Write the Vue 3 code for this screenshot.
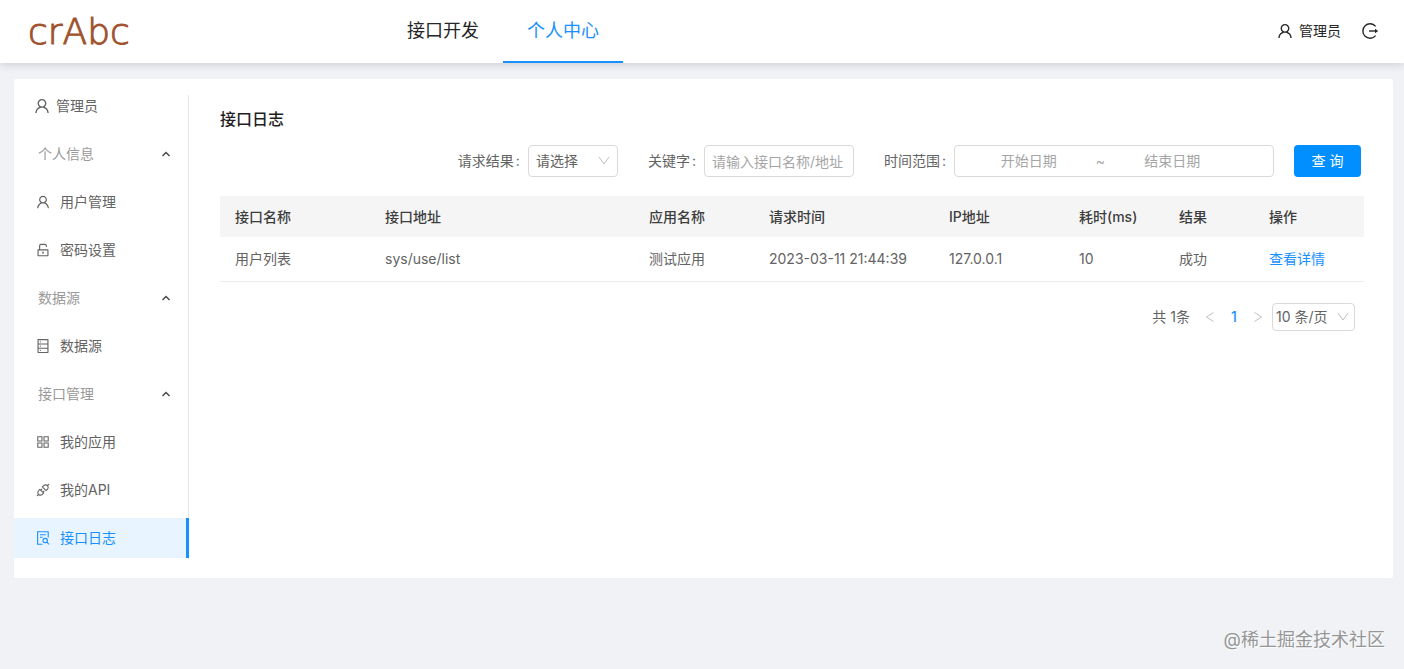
<script setup>
import { ref } from 'vue'

const userPath = 'M858.5 763.6a374 374 0 00-80.6-119.5 375.63 375.63 0 00-119.5-80.6c-.4-.2-.8-.3-1.2-.5C719.5 518 760 444.7 760 362c0-137-111-248-248-248S264 225 264 362c0 82.7 40.5 156 102.8 201.1-.4.2-.8.3-1.2.5-44.8 18.9-85 46-119.5 80.6a375.63 375.63 0 00-80.6 119.5A371.7 371.7 0 00136 901.8a8 8 0 008 8.2h60c4.4 0 7.9-3.5 8-7.8 2-77.2 33-149.5 87.8-204.3 56.7-56.7 132-87.9 212.2-87.9s155.5 31.2 212.2 87.9C779 752.7 810 825 812 902.2c.1 4.4 3.6 7.8 8 7.8h60a8 8 0 008-8.2c-1-47.8-10.9-94.3-29.5-138.2zM512 534c-45.9 0-89.1-17.9-121.6-50.4S340 407.9 340 362c0-45.9 17.9-89.1 50.4-121.6S466.1 190 512 190s89.1 17.9 121.6 50.4S684 316.1 684 362c0 45.9-17.9 89.1-50.4 121.6S557.9 534 512 534z'

const icons = {
  user: userPath,
  unlock: 'M832 464H332V240c0-30.9 25.1-56 56-56h248c30.9 0 56 25.1 56 56v68c0 4.4 3.6 8 8 8h56c4.4 0 8-3.6 8-8v-68c0-70.7-57.3-128-128-128H388c-70.7 0-128 57.3-128 128v224h-68c-17.7 0-32 14.3-32 32v384c0 17.7 14.3 32 32 32h640c17.7 0 32-14.3 32-32V496c0-17.7-14.3-32-32-32zm-40 376H232V536h560v304zM484 701v53c0 4.4 3.6 8 8 8h40c4.4 0 8-3.6 8-8v-53a48.01 48.01 0 10-56 0z',
  database: 'M832 64H192c-17.7 0-32 14.3-32 32v832c0 17.7 14.3 32 32 32h640c17.7 0 32-14.3 32-32V96c0-17.7-14.3-32-32-32zm-600 72h560v208H232V136zm560 480H232V408h560v208zm0 272H232V680h560v208zM304 240a40 40 0 1080 0 40 40 0 10-80 0zm0 272a40 40 0 1080 0 40 40 0 10-80 0zm0 272a40 40 0 1080 0 40 40 0 10-80 0z',
  apps: 'M464 144H160c-8.8 0-16 7.2-16 16v304c0 8.8 7.2 16 16 16h304c8.8 0 16-7.2 16-16V160c0-8.8-7.2-16-16-16zm-52 268H212V212h200v200zm452-268H560c-8.8 0-16 7.2-16 16v304c0 8.8 7.2 16 16 16h304c8.8 0 16-7.2 16-16V160c0-8.8-7.2-16-16-16zm-52 268H612V212h200v200zM464 544H160c-8.8 0-16 7.2-16 16v304c0 8.8 7.2 16 16 16h304c8.8 0 16-7.2 16-16V560c0-8.8-7.2-16-16-16zm-52 268H212V612h200v200zm452-268H560c-8.8 0-16 7.2-16 16v304c0 8.8 7.2 16 16 16h304c8.8 0 16-7.2 16-16V560c0-8.8-7.2-16-16-16zm-52 268H612V612h200v200z',
  api: 'M917.7 148.8l-42.4-42.4c-1.6-1.6-3.6-2.3-5.7-2.3s-4.1.8-5.7 2.3l-76.1 76.1a199.27 199.27 0 00-112.1-34.3c-51.2 0-102.4 19.5-141.5 58.6L432.3 308.7a8.03 8.03 0 000 11.3L704 591.7c1.6 1.6 3.6 2.3 5.7 2.3 2 0 4.1-.8 5.7-2.3l101.9-101.9c68.9-69 77-175.7 24.3-253.5l76.1-76.1c3.1-3.2 3.1-8.3 0-11.4zM769.1 441.7l-59.4 59.4-186.8-186.8 59.4-59.4c24.9-24.9 58.1-38.7 93.4-38.7 35.3 0 68.4 13.7 93.4 38.7 24.9 24.9 38.7 58.1 38.7 93.4 0 35.3-13.8 68.4-38.7 93.4zm-190.2 105a8.03 8.03 0 00-11.3 0L501 613.3 410.7 523l66.7-66.7c3.1-3.1 3.1-8.2 0-11.3L441 408.6a8.03 8.03 0 00-11.3 0L363 475.3l-43-43a7.85 7.85 0 00-5.7-2.3c-2 0-4.1.8-5.7 2.3L206.8 534.2c-68.9 69-77 175.7-24.3 253.5l-76.1 76.1a8.03 8.03 0 000 11.3l42.4 42.4c1.6 1.6 3.6 2.3 5.7 2.3s4.1-.8 5.7-2.3l76.1-76.1c33.7 22.9 72.9 34.3 112.1 34.3 51.2 0 102.4-19.5 141.5-58.6l101.9-101.9c3.1-3.1 3.1-8.2 0-11.3l-43-43 66.7-66.7c3.1-3.1 3.1-8.2 0-11.3l-36.6-36.2zM441.7 769.1a131.32 131.32 0 01-93.4 38.7c-35.3 0-68.4-13.7-93.4-38.7a131.32 131.32 0 01-38.7-93.4c0-35.3 13.7-68.4 38.7-93.4l59.4-59.4 186.8 186.8-59.4 59.4z',
}

const tabs = ['接口开发', '个人中心']
const activeTab = ref('个人中心')

const groups = ref([
  {
    title: '个人信息',
    open: true,
    items: [
      { name: '用户管理', icon: 'user' },
      { name: '密码设置', icon: 'unlock' },
    ],
  },
  {
    title: '数据源',
    open: true,
    items: [{ name: '数据源', icon: 'database' }],
  },
  {
    title: '接口管理',
    open: true,
    items: [
      { name: '我的应用', icon: 'apps' },
      { name: '我的API', icon: 'api' },
      { name: '接口日志', icon: 'log' },
    ],
  },
])
const activeItem = ref('接口日志')

const result = ref('')
const keyword = ref('')
const startDate = ref('')
const endDate = ref('')
const pageSize = ref(10)

const columns = [
  { title: '接口名称', key: 'name', cls: 'w150' },
  { title: '接口地址', key: 'path', cls: '' },
  { title: '应用名称', key: 'app', cls: 'w120' },
  { title: '请求时间', key: 'time', cls: 'w180' },
  { title: 'IP地址', key: 'ip', cls: 'w130' },
  { title: '耗时(ms)', key: 'cost', cls: 'w100' },
  { title: '结果', key: 'result', cls: 'w90' },
]

const rows = ref([
  {
    name: '用户列表',
    path: 'sys/use/list',
    app: '测试应用',
    time: '2023-03-11 21:44:39',
    ip: '127.0.0.1',
    cost: 10,
    result: '成功',
  },
])
</script>

<template>
  <div class="page">
    <header class="header">
      <a class="logo" href="#" aria-label="crAbc">
        <svg width="120" height="52" viewBox="0 0 120 52">
          <text x="0" y="38">crAbc</text>
        </svg>
      </a>
      <nav class="tabs">
        <a
          v-for="tab in tabs"
          :key="tab"
          href="#"
          class="tab"
          :class="{ active: tab === activeTab }"
          @click.prevent="activeTab = tab"
        >{{ tab }}</a>
      </nav>
      <div class="account">
        <a href="#" class="account-name">
          <svg width="16" height="16" viewBox="64 64 896 896" fill="currentColor"><path :d="userPath" /></svg>
          <span>管理员</span>
        </a>
        <button class="logout" type="button" aria-label="退出">
          <svg width="18" height="18" viewBox="0 0 18 18" fill="none" stroke="currentColor" stroke-width="1.4">
            <path d="M14.6 4.4A7.2 7.2 0 1 0 14.6 13.6" />
            <path d="M8 9h7" />
            <path d="M14 6.8L17.2 9 14 11.2z" fill="currentColor" stroke="none" />
          </svg>
        </button>
      </div>
    </header>

    <div class="card">
      <aside class="sidebar">
        <div class="sidebar-user">
          <svg width="16" height="16" viewBox="64 64 896 896" fill="currentColor"><path :d="userPath" /></svg>
          <span>管理员</span>
        </div>
        <nav class="menu">
          <template v-for="group in groups" :key="group.title">
            <button class="group" type="button" @click="group.open = !group.open">
              <span>{{ group.title }}</span>
              <svg :class="{ closed: !group.open }" width="10" height="10" viewBox="0 0 10 10" fill="none" stroke="currentColor" stroke-width="1.3">
                <path d="M1.5 7L5 3.5 8.5 7" />
              </svg>
            </button>
            <template v-if="group.open">
              <a
                v-for="item in group.items"
                :key="item.name"
                href="#"
                class="item"
                :class="{ active: item.name === activeItem }"
                @click.prevent="activeItem = item.name"
              >
                <svg v-if="item.icon === 'log'" width="14" height="14" viewBox="0 0 14 14" fill="none" stroke="currentColor" stroke-width="1.1">
                  <path d="M6.4 13.2H1.6V.8h10.6v5.8M4 3.8h5.8M4 6.2h2.6" />
                  <circle cx="9.2" cy="9.6" r="2.2" />
                  <path d="M10.8 11.2l2.2 2.2" />
                </svg>
                <svg v-else width="14" height="14" viewBox="64 64 896 896" fill="currentColor"><path :d="icons[item.icon]" /></svg>
                <span>{{ item.name }}</span>
              </a>
            </template>
          </template>
        </nav>
      </aside>

      <main class="content">
        <h1 class="title">接口日志</h1>

        <form class="filters" @submit.prevent>
          <div class="field">
            <label for="result">请求结果<span class="colon">:</span></label>
            <div class="select">
              <select id="result" v-model="result">
                <option value="">请选择</option>
                <option value="1">成功</option>
                <option value="0">失败</option>
              </select>
              <svg width="12" height="12" viewBox="0 0 12 12" fill="none" stroke="currentColor"><path d="M1 2l5 7 5-7" /></svg>
            </div>
          </div>
          <div class="field">
            <label for="keyword">关键字<span class="colon">:</span></label>
            <input id="keyword" v-model="keyword" class="keyword" type="text" placeholder="请输入接口名称/地址">
          </div>
          <div class="field">
            <label for="start">时间范围<span class="colon">:</span></label>
            <div class="range">
              <input id="start" v-model="startDate" type="text" placeholder="开始日期">
              <span class="tilde">~</span>
              <input v-model="endDate" type="text" placeholder="结束日期" aria-label="结束日期">
            </div>
          </div>
          <button class="query" type="submit">查 询</button>
        </form>

        <table class="table">
          <thead>
            <tr>
              <th v-for="col in columns" :key="col.key" :class="col.cls">{{ col.title }}</th>
              <th class="w110">操作</th>
            </tr>
          </thead>
          <tbody>
            <tr v-for="(row, i) in rows" :key="i">
              <td v-for="col in columns" :key="col.key">{{ row[col.key] }}</td>
              <td><a href="#" class="link">查看详情</a></td>
            </tr>
          </tbody>
        </table>

        <div class="pagination">
          <span class="total">共 {{ rows.length }}条</span>
          <button type="button" class="arrow" aria-label="上一页" disabled>
            <svg width="10" height="12" viewBox="0 0 10 12" fill="none" stroke="currentColor"><path d="M8.5 1.5L1.5 6l7 4.5" /></svg>
          </button>
          <button type="button" class="current">1</button>
          <button type="button" class="arrow" aria-label="下一页" disabled>
            <svg width="10" height="12" viewBox="0 0 10 12" fill="none" stroke="currentColor"><path d="M1.5 1.5l7 4.5-7 4.5" /></svg>
          </button>
          <div class="select small">
            <select v-model="pageSize" aria-label="每页条数">
              <option :value="10">10 条/页</option>
              <option :value="20">20 条/页</option>
              <option :value="50">50 条/页</option>
            </select>
            <svg width="12" height="12" viewBox="0 0 12 12" fill="none" stroke="currentColor"><path d="M1 2l5 7 5-7" /></svg>
          </div>
        </div>
      </main>
    </div>

    <footer class="footer">@稀土掘金技术社区</footer>
  </div>
</template>

<style>
body {
  margin: 0;
  background: #f0f2f5;
}
</style>

<style scoped>
.page {
  min-height: 100vh;
  box-sizing: border-box;
  font-family: Inter, "Noto Sans CJK SC", sans-serif;
  font-size: 14px;
  line-height: 22px;
  color: #636363;
  background: #f0f2f5;
}

.page *,
.page *::before {
  box-sizing: border-box;
}

a {
  color: inherit;
  text-decoration: none;
}

button,
input,
select {
  font: inherit;
  color: inherit;
  margin: 0;
}

button {
  border: 0;
  padding: 0;
  background: none;
  cursor: pointer;
}

svg {
  display: block;
  flex: none;
}

/* header */
.header {
  display: flex;
  height: 63px;
  padding: 0 25px 0 28px;
  background: #fff;
  box-shadow: 0 2px 8px rgba(0, 21, 41, 0.15);
}

.logo {
  width: 355px;
  padding-top: 6px;
}

.logo text {
  font-family: "DejaVu Sans", sans-serif;
  font-size: 36px;
  font-weight: 200;
  fill: #a0522d;
  stroke: #a0522d;
  stroke-width: 1px;
  stroke-linejoin: round;
}

.tabs {
  display: flex;
}

.tab {
  padding: 0 24px;
  font-size: 18px;
  line-height: 61px;
  color: #262626;
  border-bottom: 2px solid transparent;
}

.tab.active {
  color: #1890ff;
  border-bottom-color: #1890ff;
}

.account {
  display: flex;
  align-items: center;
  gap: 20px;
  margin-left: auto;
  padding-bottom: 2px;
  color: #262626;
}

.account-name,
.sidebar-user {
  display: flex;
  align-items: center;
  gap: 6px;
}

/* layout */
.card {
  display: flex;
  margin: 16px 11px 0 14px;
  padding: 16px 0 18px;
  background: #fff;
  border-radius: 2px;
}

.sidebar {
  flex: none;
  width: 175px;
  padding-bottom: 2px;
  border-right: 1px solid #e4e6e9;
}

.sidebar-user {
  padding-left: 20px;
}

.menu {
  display: flex;
  flex-direction: column;
  gap: 8px;
  margin-top: 17px;
}

.group {
  display: flex;
  align-items: center;
  justify-content: space-between;
  height: 40px;
  padding: 0 17px 0 24px;
  color: #999;
}

.group svg {
  color: #404040;
}

.group .closed {
  transform: rotate(180deg);
}

.item {
  display: flex;
  align-items: center;
  gap: 10px;
  height: 40px;
  padding-left: 22px;
}

.item.active {
  margin-right: -1px;
  color: #1890ff;
  background: #e8f4ff;
  border-right: 3px solid #1890ff;
}

.content {
  flex: 1;
  min-width: 0;
  padding: 12px 29px 0 31px;
}

.title {
  margin: 0;
  font-size: 16px;
  line-height: 24px;
  font-weight: 500;
  color: #1f1f1f;
}

/* filters */
.filters {
  display: flex;
  justify-content: flex-end;
  margin-top: 14px;
  padding-right: 3px;
}

.field {
  display: flex;
  align-items: center;
  margin-right: 30px;
}

.field:nth-child(3) {
  margin-right: 20px;
}

.colon {
  margin: 0 8px 0 2px;
}

.select {
  display: grid;
  align-items: center;
  width: 90px;
}

.select > * {
  grid-area: 1 / 1;
}

.select select {
  appearance: none;
  width: 100%;
  height: 32px;
  padding: 0 24px 0 7px;
  background: #fff;
  border: 1px solid #d9d9d9;
  border-radius: 4px;
}

.select svg {
  justify-self: end;
  margin-right: 8px;
  color: #bfbfbf;
  pointer-events: none;
}

.select.small {
  width: 83px;
}

.select.small select {
  height: 28px;
  padding: 0 20px 0 3px;
}

.select.small svg {
  margin-right: 6px;
}

.keyword,
.range {
  height: 32px;
  background: #fff;
  border: 1px solid #d9d9d9;
  border-radius: 4px;
}

.keyword {
  width: 150px;
  padding: 0 7px;
}

.range {
  display: flex;
  align-items: center;
  width: 320px;
  padding: 0 37px 0 10px;
}

.range input {
  flex: 1;
  min-width: 0;
  padding: 0;
  text-align: center;
  background: none;
  border: 0;
}

input::placeholder {
  color: #a6a6a6;
  opacity: 1;
}

.tilde {
  width: 16px;
  text-align: center;
  color: #a6a6a6;
}

.query {
  width: 67px;
  height: 32px;
  color: #fff;
  background: #018fff;
  border-radius: 4px;
}

/* table */
.table {
  width: 100%;
  margin-top: 19px;
  table-layout: fixed;
  border-collapse: separate;
  border-spacing: 0;
  text-align: left;
}

.table th,
.table td {
  padding: 0 15px;
}

.table th {
  height: 41px;
  font-weight: 500;
  color: #3d3d3d;
  background: #f5f5f5;
}

.table td {
  height: 45px;
  border-bottom: 1px solid #ebeef0;
}

.w90 { width: 90px; }
.w100 { width: 100px; }
.w110 { width: 110px; }
.w120 { width: 120px; }
.w130 { width: 130px; }
.w150 { width: 150px; }
.w180 { width: 180px; }

.link {
  color: #1890ff;
}

/* pagination */
.pagination {
  display: flex;
  align-items: center;
  justify-content: flex-end;
  margin-top: 21px;
  padding-right: 9px;
}

.total {
  margin-right: 8px;
}

.arrow,
.current {
  display: flex;
  align-items: center;
  justify-content: center;
  width: 24px;
  height: 24px;
}

.arrow {
  color: #bfbfbf;
}

.current {
  font-weight: 500;
  color: #1890ff;
}

.pagination .select {
  margin-left: 2px;
}

.footer {
  padding: 48px 19px 15px;
  font-size: 18px;
  line-height: 28px;
  text-align: right;
  color: #969696;
  text-shadow: 1px 1px 1px #fff;
}
</style>
